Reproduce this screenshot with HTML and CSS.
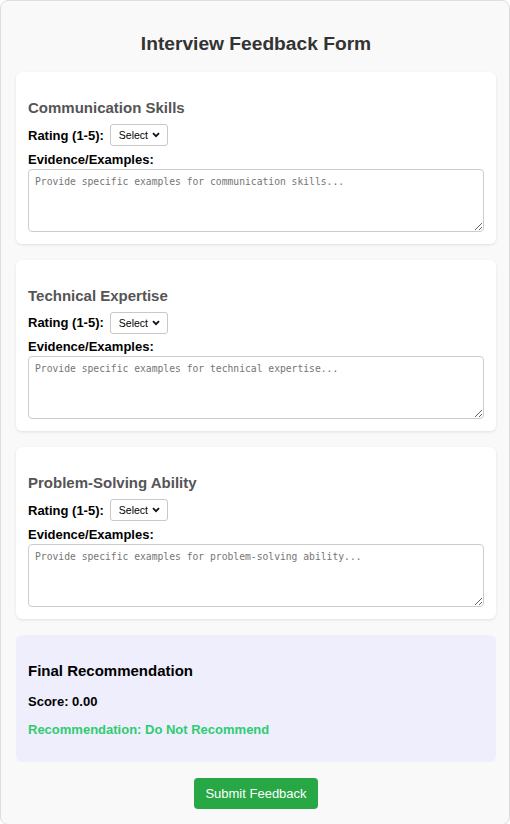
FILE: index.html
```html
<!DOCTYPE html>
<html lang="en">
<head>
<meta charset="utf-8">
<title>Interview Feedback Form</title>
<link rel="stylesheet" href="styles.css">
</head>
<body>
<div class="container">
  <h2 class="title">Interview Feedback Form</h2>

  <div class="card">
    <h3 class="card-title">Communication Skills</h3>
    <div class="rating-row">
      <label class="label">Rating (1-5):</label>
      <span class="select-wrap">
        <select class="select"><option>Select</option><option>1</option><option>2</option><option>3</option><option>4</option><option>5</option></select>
        <svg class="chev" width="8" height="6" viewBox="0 0 8 6"><path d="M1 1.2 L4 4.2 L7 1.2" fill="none" stroke="#111" stroke-width="1.8"/></svg>
      </span>
    </div>
    <label class="label block">Evidence/Examples:</label>
    <textarea class="textarea" placeholder="Provide specific examples for communication skills..."></textarea>
  </div>

  <div class="card">
    <h3 class="card-title">Technical Expertise</h3>
    <div class="rating-row">
      <label class="label">Rating (1-5):</label>
      <span class="select-wrap">
        <select class="select"><option>Select</option><option>1</option><option>2</option><option>3</option><option>4</option><option>5</option></select>
        <svg class="chev" width="8" height="6" viewBox="0 0 8 6"><path d="M1 1.2 L4 4.2 L7 1.2" fill="none" stroke="#111" stroke-width="1.8"/></svg>
      </span>
    </div>
    <label class="label block">Evidence/Examples:</label>
    <textarea class="textarea" placeholder="Provide specific examples for technical expertise..."></textarea>
  </div>

  <div class="card">
    <h3 class="card-title">Problem-Solving Ability</h3>
    <div class="rating-row">
      <label class="label">Rating (1-5):</label>
      <span class="select-wrap">
        <select class="select"><option>Select</option><option>1</option><option>2</option><option>3</option><option>4</option><option>5</option></select>
        <svg class="chev" width="8" height="6" viewBox="0 0 8 6"><path d="M1 1.2 L4 4.2 L7 1.2" fill="none" stroke="#111" stroke-width="1.8"/></svg>
      </span>
    </div>
    <label class="label block">Evidence/Examples:</label>
    <textarea class="textarea" placeholder="Provide specific examples for problem-solving ability..."></textarea>
  </div>

  <div class="summary">
    <h3 class="summary-title">Final Recommendation</h3>
    <p class="score">Score: 0.00</p>
    <p class="recommendation">Recommendation: Do Not Recommend</p>
  </div>

  <div class="actions">
    <button class="submit" type="button">Submit Feedback</button>
  </div>
</div>
</body>
</html>
```
FILE: styles.css
```css
* { box-sizing: border-box; }

html, body {
  margin: 0;
  padding: 0;
  background: #ffffff;
  font-family: "Liberation Sans", Arial, sans-serif;
}

.container {
  width: 100%;
  background: #f9f9f9;
  border: 1px solid #dddddd;
  border-radius: 8px;
  padding: 15px 13px 15px 15px;
  display: flex;
  flex-direction: column;
  gap: 16px;
}

.title {
  margin: 17px 0 1px;
  text-align: center;
  font-size: 19.2px;
  font-weight: bold;
  color: #333333;
}

.card {
  background: #ffffff;
  border-radius: 6px;
  box-shadow: 0 1px 3px rgba(0, 0, 0, 0.1);
  padding: 12px;
}

.card-title {
  margin: 15px 0 8px;
  font-size: 15px;
  font-weight: bold;
  color: #555555;
}

.rating-row {
  display: flex;
  align-items: center;
  gap: 6px;
  margin-bottom: 5.6px;
}

.label {
  font-size: 13px;
  font-weight: bold;
  color: #000000;
}

.label.block {
  display: block;
  line-height: 15px;
  margin-bottom: 2px;
}

.select-wrap {
  position: relative;
  display: inline-block;
}

.select {
  appearance: none;
  -webkit-appearance: none;
  width: 58px;
  height: 22px;
  padding: 0 0 0 8px;
  font-family: "Liberation Sans", Arial, sans-serif;
  font-size: 10.5px;
  color: #000000;
  background: #ffffff;
  border: 1px solid #c8c8c8;
  border-radius: 3px;
  display: block;
}

.chev {
  position: absolute;
  right: 8px;
  top: 8px;
  pointer-events: none;
}

.textarea {
  display: block;
  width: 100%;
  height: 63px;
  padding: 6px;
  font-family: "DejaVu Sans Mono", monospace;
  font-size: 9.7px;
  border: 1px solid #cccccc;
  border-radius: 4px;
  resize: vertical;
  background: #ffffff;
}

.textarea::placeholder {
  color: #757575;
}

.summary {
  background: #eeeefc;
  border-radius: 6px;
  padding: 12px;
}

.summary-title {
  margin: 15px 0;
  font-size: 15px;
  font-weight: bold;
  color: #000000;
}

.score {
  margin: 13px 0;
  font-size: 13px;
  font-weight: bold;
  color: #000000;
}

.recommendation {
  margin: 13px 0;
  font-size: 13px;
  font-weight: bold;
  color: #2ecc71;
}

.actions {
  display: flex;
  justify-content: center;
}

.submit {
  background: #28a745;
  color: #ffffff;
  border: none;
  border-radius: 4px;
  padding: 8px 11px;
  font-family: "Liberation Sans", Arial, sans-serif;
  font-size: 13px;
  line-height: 15px;
  cursor: pointer;
}
```
